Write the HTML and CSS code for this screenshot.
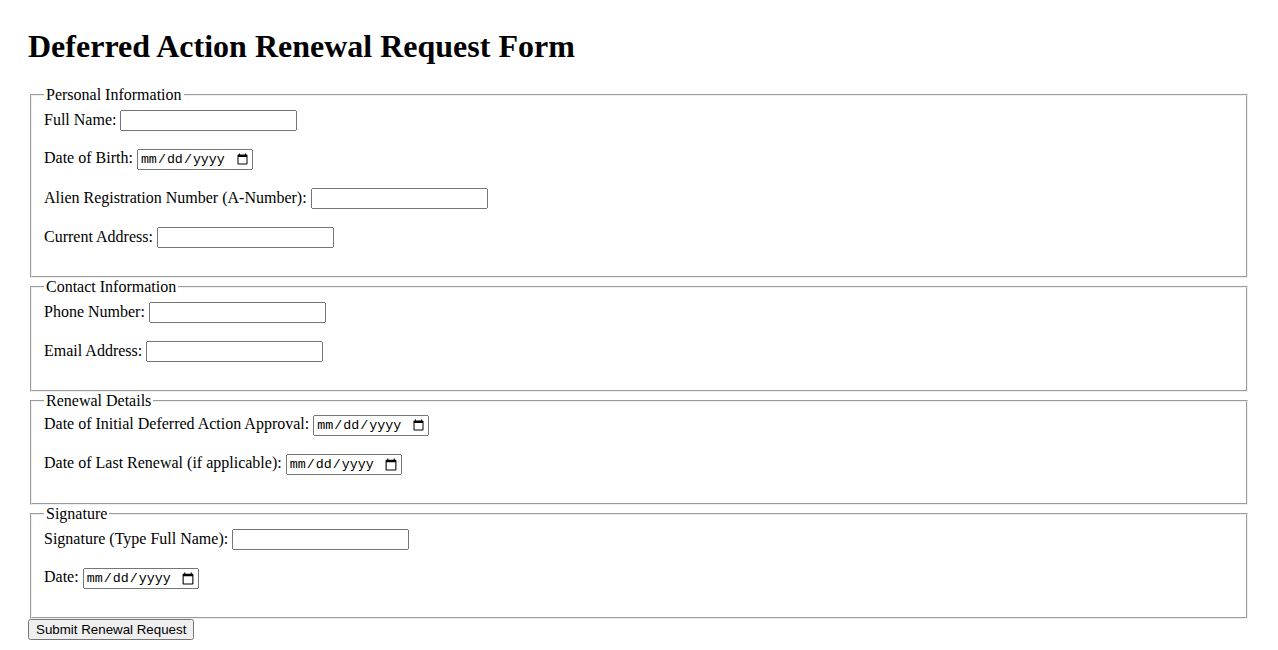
FILE: index.html
```html
<!DOCTYPE html>
<html>

<head>
    <title>Deferred Action Renewal Request Form</title>
    <meta charset="utf-8">
    <link rel="stylesheet" href="styles.css">
</head>

<body>
    <h1>Deferred Action Renewal Request Form</h1>

    <form>
        <fieldset>
            <legend>Personal Information</legend>
            <label for="fullName">Full Name:</label>
            <input type="text" id="fullName" name="fullName"><br><br>
            <label for="dob">Date of Birth:</label>
            <input type="date" id="dob" name="dob"><br><br>
            <label for="aNumber">Alien Registration Number (A-Number):</label>
            <input type="text" id="aNumber" name="aNumber"><br><br>
            <label for="address">Current Address:</label>
            <input type="text" id="address" name="address"><br><br>
        </fieldset>

        <fieldset>
            <legend>Contact Information</legend>
            <label for="phone">Phone Number:</label>
            <input type="tel" id="phone" name="phone"><br><br>
            <label for="email">Email Address:</label>
            <input type="email" id="email" name="email"><br><br>
        </fieldset>

        <fieldset>
            <legend>Renewal Details</legend>
            <label for="initialDate">Date of Initial Deferred Action Approval:</label>
            <input type="date" id="initialDate" name="initialDate"><br><br>
            <label for="lastRenewal">Date of Last Renewal (if applicable):</label>
            <input type="date" id="lastRenewal" name="lastRenewal"><br><br>
        </fieldset>

        <fieldset>
            <legend>Signature</legend>
            <label for="signature">Signature (Type Full Name):</label>
            <input type="text" id="signature" name="signature"><br><br>
            <label for="sigDate">Date:</label>
            <input type="date" id="sigDate" name="sigDate"><br><br>
        </fieldset>

        <button type="submit">Submit Renewal Request</button>
    </form>
</body>

</html>
```

FILE: styles.css
```css
body {
    margin: 28px 28px 0;
    font-family: "Liberation Serif", "Times New Roman", serif;
}

h1 {
    margin-top: 0;
}

input {
    box-sizing: border-box;
    width: 177px;
    height: 21px;
    font-family: "Liberation Sans", Arial, sans-serif;
}

input[type="date"] {
    width: 116px;
    font-family: "Liberation Mono", "Courier New", monospace;
}

button {
    font-family: "Liberation Sans", Arial, sans-serif;
}
```
